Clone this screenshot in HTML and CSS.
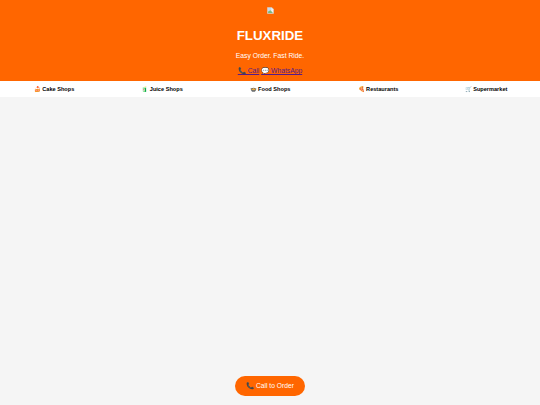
FILE: index.html
```html
<!DOCTYPE html>
<html lang="en">
<head>
<meta charset="utf-8">
<title>FluxRide</title>
<link rel="stylesheet" href="styles.css">
</head>
<body>
<header class="hero">
  <svg class="logo" viewBox="0 0 8 8" width="7" height="7" aria-hidden="true">
    <path d="M0.5 0.5H5.5L7.5 2.5V7.5H0.5Z" fill="#f2f2f2" stroke="#c8c8c8" stroke-width="0.6"/>
    <path d="M1.2 1.2H5V4L1.2 5.5Z" fill="#c4d8f0"/>
    <path d="M1.2 6.8V5L4 3.6L6.8 6.8Z" fill="#7cb87c"/>
  </svg>
  <h1 class="title">FLUXRIDE</h1>
  <p class="tagline">Easy Order. Fast Ride.</p>
  <p class="links"><a href="#call">📞 Call</a> <a href="#whatsapp">💬 WhatsApp</a></p>
</header>
<nav class="cats">
  <a class="cat" href="#cake">🍰 Cake Shops</a>
  <a class="cat" href="#juice">🧃 Juice Shops</a>
  <a class="cat" href="#food">🍲 Food Shops</a>
  <a class="cat" href="#rest">🍕 Restaurants</a>
  <a class="cat" href="#super">🛒 Supermarket</a>
</nav>
<a class="float" href="#call">📞 Call to Order</a>
</body>
</html>
```
FILE: styles.css
```css
* { box-sizing: border-box; }
html, body { height: 100%; }
body {
  margin: 0;
  background: #f5f5f5;
  font-family: "Liberation Sans", Arial, sans-serif;
  overflow: hidden;
}
.hero {
  background: #ff6600;
  color: #fff;
  text-align: center;
  padding-top: 7px;
  height: 81px;
}
.logo { display: block; margin: 0 auto; }
.title { margin: 14px 0 0; font-size: 13.3px; line-height: 16px; font-weight: 700; }
.tagline { margin: 7px 0 0; font-size: 6.75px; line-height: 10px; }
.links { margin: 5px 0 0; font-size: 6.75px; line-height: 10px; }
.links a { color: #551a8b; }
.cats {
  display: grid;
  grid-template-columns: repeat(5, 1fr);
  align-items: center;
  height: 16px;
  background: #fff;
}
.cat { color: #000; font-size: 5.6px; font-weight: 700; text-align: center; text-decoration: none; }
.float {
  position: fixed;
  left: 235px;
  bottom: 9px;
  width: 70px;
  height: 20px;
  border-radius: 10px;
  background: #ff6600;
  color: #fff;
  font-size: 6.7px;
  line-height: 20px;
  text-align: center;
  text-decoration: none;
}
```
